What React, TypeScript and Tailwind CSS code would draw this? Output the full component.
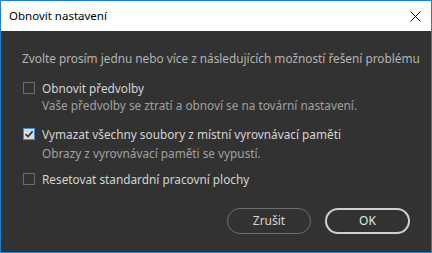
import React from "react";

const Box = ({ checked }: { checked?: boolean }) =>
  checked ? (
    <div className="w-[12px] h-[12px] border border-[#3d8ee0] bg-[#dcdcdc] flex items-center justify-center shrink-0">
      <svg width="10" height="10" viewBox="0 0 10 10">
        <path d="M1.5 5.2 L4 7.6 L8.6 2.4" stroke="#333" strokeWidth="1.6" fill="none" />
      </svg>
    </div>
  ) : (
    <div className="w-[12px] h-[12px] border border-[#6b6b6b] shrink-0" />
  );

export default function App() {
  return (
    <div
      className="w-[432px] h-[253px] border border-[#1883d7] bg-[#323232] flex flex-col"
      style={{ fontFamily: '"Noto Sans", sans-serif' }}
    >
      <div className="h-[30px] bg-white flex items-center justify-between pl-[8px] pr-[10px] shrink-0">
        <span className="text-[11.5px] text-black">Obnovit nastavení</span>
        <svg width="11" height="11" viewBox="0 0 11 11">
          <path d="M0.5 0.5 L10.5 10.5 M10.5 0.5 L0.5 10.5" stroke="#000" strokeWidth="1" />
        </svg>
      </div>
      <div className="flex flex-col pl-[21px] pt-[19px] text-[11.8px]">
        <div className="text-[#b4b4b4] leading-[16px]">
          Zvolte prosím jednu nebo více z následujících možností řešení problému
        </div>
        <div className="mt-[14px] flex items-center gap-[7px] pl-[1px]">
          <Box />
          <span className="text-[#d4d4d4] leading-[16px]">Obnovit předvolby</span>
        </div>
        <div className="pl-[20px] text-[#a0a0a0] leading-[16px] mt-[1px]">
          Vaše předvolby se ztratí a obnoví se na tovární nastavení.
        </div>
        <div className="mt-[13px] flex items-center gap-[7px] pl-[1px]">
          <Box checked />
          <span className="text-[#d4d4d4] leading-[16px]">
            Vymazat všechny soubory z místní vyrovnávací paměti
          </span>
        </div>
        <div className="pl-[20px] text-[#a0a0a0] leading-[16px] mt-[3px]">
          Obrazy z vyrovnávací paměti se vypustí.
        </div>
        <div className="mt-[10px] flex items-center gap-[7px] pl-[1px]">
          <Box />
          <span className="text-[#d4d4d4] leading-[16px]">Resetovat standardní pracovní plochy</span>
        </div>
      </div>
      <div className="flex justify-end gap-[14px] pr-[21px] mt-[21px]">
        <button className="w-[84px] h-[26px] rounded-full border-[1.5px] border-[#6e6e6e] text-[#d4d4d4] text-[12px]">
          Zrušit
        </button>
        <button className="w-[85px] h-[26px] rounded-full border-2 border-[#cfcfcf] text-[#e6e6e6] text-[12px]">
          OK
        </button>
      </div>
    </div>
  );
}
